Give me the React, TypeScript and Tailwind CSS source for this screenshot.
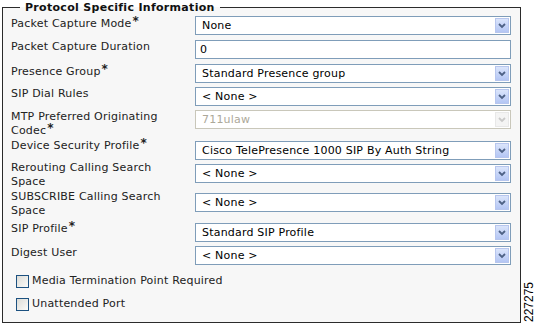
type Row = {
  label: string[];
  required?: boolean;
  kind: "select" | "input" | "disabled";
  value: string;
  h: string;
  lt: string;
};

const rows: Row[] = [
  { label: ["Packet Capture Mode"], required: true, kind: "select", value: "None", h: "h-[24px]", lt: "mt-[1px]" },
  { label: ["Packet Capture Duration"], kind: "input", value: "0", h: "h-[24px]", lt: "mt-0" },
  { label: ["Presence Group"], required: true, kind: "select", value: "Standard Presence group", h: "h-[23px]", lt: "mt-[1px]" },
  { label: ["SIP Dial Rules"], kind: "select", value: "< None >", h: "h-[23px]", lt: "mt-0" },
  { label: ["MTP Preferred Originating", "Codec"], required: true, kind: "disabled", value: "711ulaw", h: "h-[31px]", lt: "mt-0" },
  { label: ["Device Security Profile"], required: true, kind: "select", value: "Cisco TelePresence 1000 SIP By Auth String", h: "h-[23px]", lt: "-mt-[2px]" },
  { label: ["Rerouting Calling Search", "Space"], kind: "select", value: "< None >", h: "h-[29px]", lt: "-mt-[3px]" },
  { label: ["SUBSCRIBE Calling Search", "Space"], kind: "select", value: "< None >", h: "h-[30px]", lt: "-mt-[3px]" },
  { label: ["SIP Profile"], required: true, kind: "select", value: "Standard SIP Profile", h: "h-[23px]", lt: "-mt-[1px]" },
  { label: ["Digest User"], kind: "select", value: "< None >", h: "h-[29px]", lt: "mt-0" },
];

function Star() {
  return <span className="relative -top-[2px] ml-[1px] text-[12px] font-bold leading-none">*</span>;
}

function Chevron({ color }: { color: string }) {
  return (
    <svg width="8" height="6" viewBox="0 0 8 6" className="block">
      <path d="M1 1 L4 4 L7 1" fill="none" stroke={color} strokeWidth="1.8" />
    </svg>
  );
}

function Control({ kind, value }: { kind: Row["kind"]; value: string }) {
  if (kind === "input") {
    return (
      <div className="flex h-[19px] w-[316px] items-center border border-[#7f9db9] bg-white px-[4px] text-black">
        {value}
      </div>
    );
  }
  const disabled = kind === "disabled";
  return (
    <div
      className={
        disabled
          ? "flex h-[19px] w-[316px] items-center border border-[#c9c7ba] bg-white pl-[6px] pr-[1px] text-[#aca899]"
          : "flex h-[19px] w-[316px] items-center border border-[#7f9db9] bg-white pl-[6px] pr-[1px] text-black"
      }
    >
      <span className="flex-1">{value}</span>
      {disabled ? (
        <span className="flex h-[15px] w-[14px] items-center justify-center border border-[#e8e8e8] bg-[#f4f4f4]">
          <Chevron color="#c9c9c9" />
        </span>
      ) : (
        <span className="flex h-[15px] w-[14px] items-center justify-center border border-[#b7c6ee] bg-gradient-to-b from-[#dbe5fb] to-[#b4c6f4]">
          <Chevron color="#4d6185" />
        </span>
      )}
    </div>
  );
}

function Checkbox({ label }: { label: string }) {
  return (
    <div className="flex h-[23px] items-start pl-[5px]">
      <span className="h-[13px] w-[13px] border border-[#1c5180] bg-gradient-to-br from-[#dcdcd7] to-[#fbfbf9]" />
      <span className="-mt-[1px] ml-[3px]">{label}</span>
    </div>
  );
}

export default function App() {
  return (
    <div className="flex h-[325px] w-[536px] bg-white font-['DejaVu_Sans',sans-serif] text-[11px] leading-[14px] tracking-[0.2px] text-[#222]">
      <fieldset className="ml-[2px] h-[323px] w-[519px] border border-[#2b2b2b] bg-[#f7f7f7] pl-[8px]">
        <legend className="ml-[9px] px-[5px] text-[11px] font-bold leading-[15px] tracking-[0.3px] text-[#111]">
          Protocol Specific Information
        </legend>
        <div className="flex flex-col pt-[1px]">
          {rows.map((r) => (
            <div key={r.label.join(" ")} className={`flex items-start ${r.h}`}>
              <div className={`w-[184px] ${r.lt}`}>
                {r.label.map((line, i) => (
                  <div key={i}>
                    {line}
                    {r.required && i === r.label.length - 1 && <Star />}
                  </div>
                ))}
              </div>
              <Control kind={r.kind} value={r.value} />
            </div>
          ))}
          <Checkbox label="Media Termination Point Required" />
          <Checkbox label="Unattended Port" />
        </div>
      </fieldset>
      <div className="flex flex-1 items-end justify-center pb-[3px]">
        <span className="rotate-180 font-['Liberation_Sans',sans-serif] text-[12px] leading-none tracking-normal text-black [writing-mode:vertical-rl]">
          227275
        </span>
      </div>
    </div>
  );
}
